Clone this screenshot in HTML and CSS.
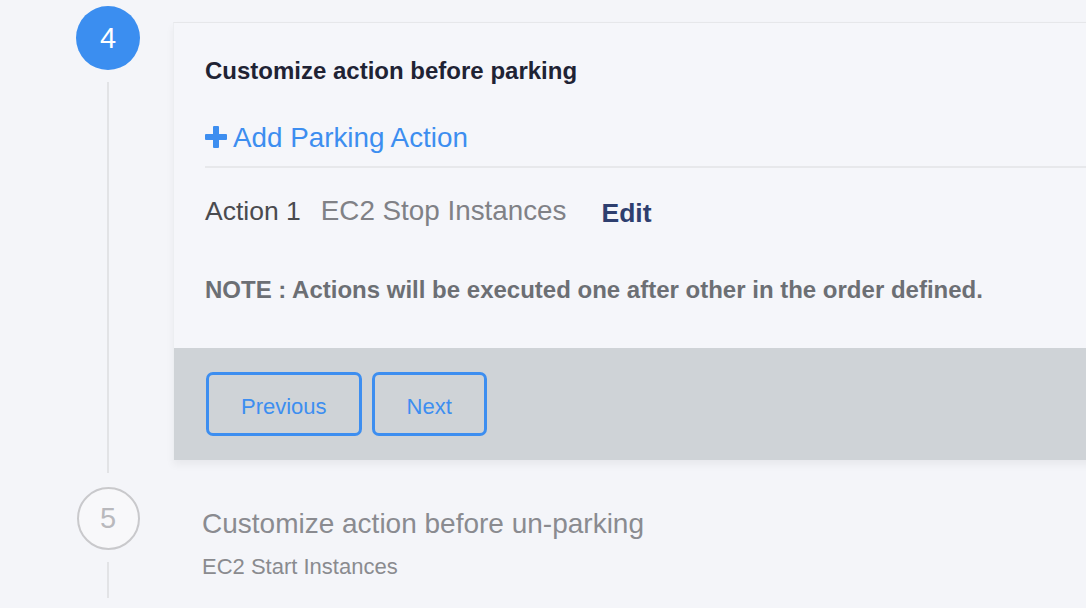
FILE: index.html
```html
<!DOCTYPE html>
<html>
<head>
<meta charset="utf-8">
<link rel="stylesheet" href="styles.css">
</head>
<body>
<div class="stepper">
  <div class="step step-active">
    <div class="rail">
      <div class="circle circle-active">4</div>
      <div class="line"></div>
    </div>
    <div class="card">
      <div class="card-body">
        <h2 class="card-title">Customize action before parking</h2>
        <div class="add-row">
          <span class="add-link">
            <svg class="plus" width="22" height="22" viewBox="0 0 22 22"><rect x="8" y="0" width="6" height="22" rx="1" fill="#3d8ef0"/><rect x="0" y="8" width="22" height="6" rx="1" fill="#3d8ef0"/></svg>
            <span>Add Parking Action</span>
          </span>
        </div>
        <div class="action-row">
          <span class="action-label">Action 1</span>
          <span class="action-name">EC2 Stop Instances</span>
          <span class="action-edit">Edit</span>
        </div>
        <p class="note">NOTE : Actions will be executed one after other in the order defined.</p>
      </div>
      <div class="card-footer">
        <button class="btn">Previous</button>
        <button class="btn">Next</button>
      </div>
    </div>
  </div>
  <div class="step step-next">
    <div class="rail">
      <div class="circle circle-idle">5</div>
      <div class="line"></div>
    </div>
    <div class="step-info">
      <div class="step-title">Customize action before un-parking</div>
      <div class="step-sub">EC2 Start Instances</div>
    </div>
  </div>
</div>
</body>
</html>
```
FILE: styles.css
```css
html, body {
  margin: 0;
  padding: 0;
}
body {
  background: #f4f5f9;
  font-family: "Liberation Sans", Arial, sans-serif;
  width: 1086px;
  height: 608px;
  overflow: hidden;
}
.stepper {
  padding-left: 76px;
  padding-top: 6px;
}
.step {
  display: flex;
}
.rail {
  width: 64px;
  display: flex;
  flex-direction: column;
  align-items: center;
  flex: none;
}
.circle {
  box-sizing: border-box;
  width: 64px;
  height: 64px;
  border-radius: 50%;
  display: flex;
  align-items: center;
  justify-content: center;
  font-size: 29px;
  flex: none;
}
.circle-active {
  background: #3b8ef0;
  color: #ffffff;
}
.circle-idle {
  width: 63px;
  height: 63px;
  border: 2px solid #c9c9cc;
  background: #f8f8fa;
  color: #b9b9bd;
}
.line {
  flex: 1;
  width: 2px;
  background: #e2e3e6;
  margin-top: 12px;
}
.card {
  flex: 1;
  margin-left: 33px;
  margin-right: -40px;
  margin-top: 16px;
  margin-bottom: 13px;
  background: #f5f6fa;
  border-top: 1px solid #e6e7ea;
  border-left: 1px solid #eceef1;
  box-shadow: 0 5px 8px rgba(0, 0, 0, 0.05);
}
.card-body {
  padding: 34px 0 44px 31px;
}
.card-title {
  margin: 0;
  font-size: 24px;
  line-height: 28px;
  font-weight: bold;
  color: #1f2334;
}
.add-row {
  margin-top: 37px;
  padding-bottom: 12px;
  border-bottom: 2px solid #e7e8eb;
}
.add-link {
  display: inline-flex;
  align-items: center;
  gap: 6px;
  color: #3d8ef0;
  font-size: 27.8px;
  line-height: 32px;
}
.plus {
  display: block;
  margin-top: -2px;
}
.action-row {
  margin-top: 27px;
  display: flex;
  align-items: baseline;
  line-height: 32px;
}
.action-label {
  font-size: 26.5px;
  color: #4a4b4f;
}
.action-name {
  font-size: 27.8px;
  color: #808186;
  margin-left: 20px;
}
.action-edit {
  font-size: 26.5px;
  font-weight: bold;
  color: #2e3f6f;
  margin-left: 35px;
  position: relative;
  top: 2px;
}
.note {
  margin: 49px 0 0;
  font-size: 24px;
  line-height: 28px;
  font-weight: bold;
  color: #6c6f74;
}
.card-footer {
  background: #cfd3d7;
  height: 112px;
  box-sizing: border-box;
  padding: 24px 0 0 32px;
  display: flex;
  gap: 10px;
  align-items: flex-start;
}
.btn {
  height: 64px;
  padding: 5px 32px 0;
  border: 3px solid #3d8ef0;
  border-radius: 7px;
  background: transparent;
  color: #3d8ef0;
  font-family: "Liberation Sans", Arial, sans-serif;
  font-size: 22px;
}
.step-next {
  margin-top: 14px;
}
.step-next .line {
  margin-top: 12px;
  flex: none;
  height: 36px;
}
.step-info {
  margin-left: 62px;
  padding-top: 21px;
}
.step-title {
  font-size: 28px;
  line-height: 32px;
  color: #8a8b90;
}
.step-sub {
  margin-top: 14px;
  font-size: 22px;
  line-height: 26px;
  color: #8a8b8f;
}
```
